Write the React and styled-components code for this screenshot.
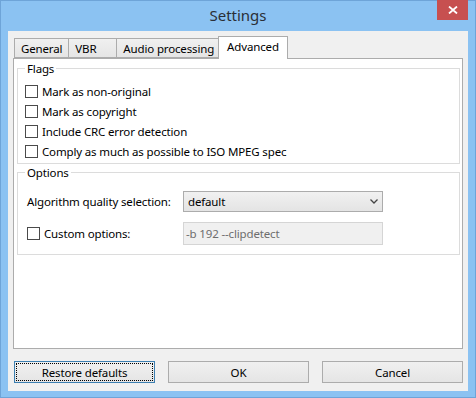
import * as React from 'react';
import styled, {createGlobalStyle} from 'styled-components';

const GlobalStyle = createGlobalStyle`
  html, body {
    margin: 0;
    padding: 0;
  }
  body {
    font-family: "Noto Sans", "Open Sans", sans-serif;
    font-size: 11.5px;
    letter-spacing: -0.15px;
    color: #000;
  }
`;

const Window = styled.div`
  width: 476px;
  height: 398px;
  box-sizing: border-box;
  background: #8bc2f2;
  box-shadow: inset 0 0 0 1px #6ea4d8;
  display: flex;
  flex-direction: column;
`;

const TitleBar = styled.div`
  height: 31px;
  display: grid;
  grid-template-columns: 1fr auto 1fr;
  align-items: start;
`;

const Title = styled.div`
  grid-column: 2;
  padding-top: 5px;
  font-size: 15px;
  letter-spacing: 0;
  line-height: 20px;
  color: #2a2f36;
`;

const CloseButton = styled.div`
  grid-column: 3;
  justify-self: end;
  margin-right: 8px;
  width: 31px;
  height: 20px;
  background: #c75050;
  display: flex;
  align-items: center;
  justify-content: center;
`;

const Client = styled.div`
  margin: 0 8px;
  height: 360px;
  background: #f0f0f0;
  box-sizing: border-box;
  padding: 5px 5px 8px 5px;
  display: flex;
  flex-direction: column;
`;

const TabRow = styled.div`
  display: flex;
  align-items: flex-end;
  height: 22px;
  padding-left: 1px;
`;

const Tab = styled.div`
  position: relative;
  box-sizing: border-box;
  min-width: ${(p) => (p.$active ? '69px' : '49px')};
  height: ${(p) => (p.$active ? '23px' : '20px')};
  margin: ${(p) => (p.$active ? '0 -2px -1px -2px' : '0 -1px 0 0')};
  padding: ${(p) => (p.$active ? '0 8px 3px 8px' : '0 6px')};
  border: 1px solid #acacac;
  border-bottom: ${(p) => (p.$active ? 'none' : '1px solid #acacac')};
  background: ${(p) => (p.$active ? '#fff' : 'linear-gradient(#f0f0f0, #e5e5e5)')};
  z-index: ${(p) => (p.$active ? 2 : 1)};
  display: flex;
  align-items: center;
  white-space: nowrap;
`;

const Panel = styled.div`
  height: 291px;
  box-sizing: border-box;
  border: 1px solid #acacac;
  background: #fff;
  padding: 2px 2px 0 3px;
  display: flex;
  flex-direction: column;
`;

const Group = styled.fieldset`
  margin: ${(p) => p.$margin || '0'};
  padding: ${(p) => p.$padding || '0'};
  border: 1px solid #dcdcdc;
  min-width: 0;
`;

const Legend = styled.legend`
  padding: 0 2px;
  line-height: 15px;
`;

const CheckRow = styled.label`
  display: flex;
  align-items: center;
  gap: 4px;
  height: 20px;
  white-space: nowrap;
`;

const CheckBox = styled.span`
  display: inline-block;
  width: 13px;
  height: 13px;
  box-sizing: border-box;
  border: 1px solid #4a4a4a;
  background: #fff;
  flex: none;
`;

const OptionsGrid = styled.div`
  display: grid;
  grid-template-columns: 156px 200px;
  row-gap: 10px;
  padding-left: 2px;
  align-items: center;
`;

const Select = styled.div`
  height: 21px;
  box-sizing: border-box;
  border: 1px solid #acacac;
  background: linear-gradient(#f1f1f1, #e4e4e4);
  display: flex;
  align-items: center;
  justify-content: space-between;
  padding: 0 4px 0 4px;
`;

const TextBox = styled.div`
  height: 23px;
  box-sizing: border-box;
  border: 1px solid #d5d5d5;
  background: #f0f0f0;
  color: #6d6d6d;
  display: flex;
  align-items: center;
  padding-left: 2px;
`;

const ButtonRow = styled.div`
  margin-top: 12px;
  display: grid;
  grid-template-columns: repeat(3, 1fr);
  gap: 13px;
  padding-left: 1px;
`;

const Button = styled.div`
  position: relative;
  height: 22px;
  box-sizing: border-box;
  border: 1px solid ${(p) => (p.$focused ? '#3c7fb1' : '#acacac')};
  background: linear-gradient(#f0f0f0, #e5e5e5);
  display: flex;
  align-items: center;
  justify-content: center;
  ${(p) =>
    p.$focused &&
    `
    &::after {
      content: '';
      position: absolute;
      inset: 1px;
      border: 1px dotted #000;
    }
  `}
`;

const Chevron = () => (
  <svg width="8" height="5" viewBox="0 0 8 5">
    <path d="M0.5 0.5 L4 4 L7.5 0.5" fill="none" stroke="#444" strokeWidth="1.3" />
  </svg>
);

const CloseGlyph = () => (
  <svg width="10" height="8" viewBox="0 0 10 8">
    <path d="M1 0.5 L9 7.5 M9 0.5 L1 7.5" stroke="#fff" strokeWidth="1.8" />
  </svg>
);

const Check = ({children}) => (
  <CheckRow>
    <CheckBox />
    {children}
  </CheckRow>
);

const flags = [
  'Mark as non-original',
  'Mark as copyright',
  'Include CRC error detection',
  'Comply as much as possible to ISO MPEG spec',
];

const tabs = ['General', 'VBR', 'Audio processing', 'Advanced'];

export default function App() {
  return (
    <>
      <GlobalStyle />
      <Window>
        <TitleBar>
          <Title>Settings</Title>
          <CloseButton>
            <CloseGlyph />
          </CloseButton>
        </TitleBar>
        <Client>
          <TabRow>
            {tabs.map((t) => (
              <Tab key={t} $active={t === 'Advanced'}>
                {t}
              </Tab>
            ))}
          </TabRow>
          <Panel>
            <Group $padding="0 0 2px 7px">
              <Legend>Flags</Legend>
              <div style={{paddingTop: 5}}>
                {flags.map((f) => (
                  <Check key={f}>{f}</Check>
                ))}
              </div>
            </Group>
            <Group $margin="1px 0 0 0" $padding="11px 0 9px 7px">
              <Legend>Options</Legend>
              <OptionsGrid>
                <span>Algorithm quality selection:</span>
                <Select>
                  <span>default</span>
                  <Chevron />
                </Select>
                <Check>Custom options:</Check>
                <TextBox>-b 192 --clipdetect</TextBox>
              </OptionsGrid>
            </Group>
          </Panel>
          <ButtonRow>
            <Button $focused>Restore defaults</Button>
            <Button>OK</Button>
            <Button>Cancel</Button>
          </ButtonRow>
        </Client>
      </Window>
    </>
  );
}
